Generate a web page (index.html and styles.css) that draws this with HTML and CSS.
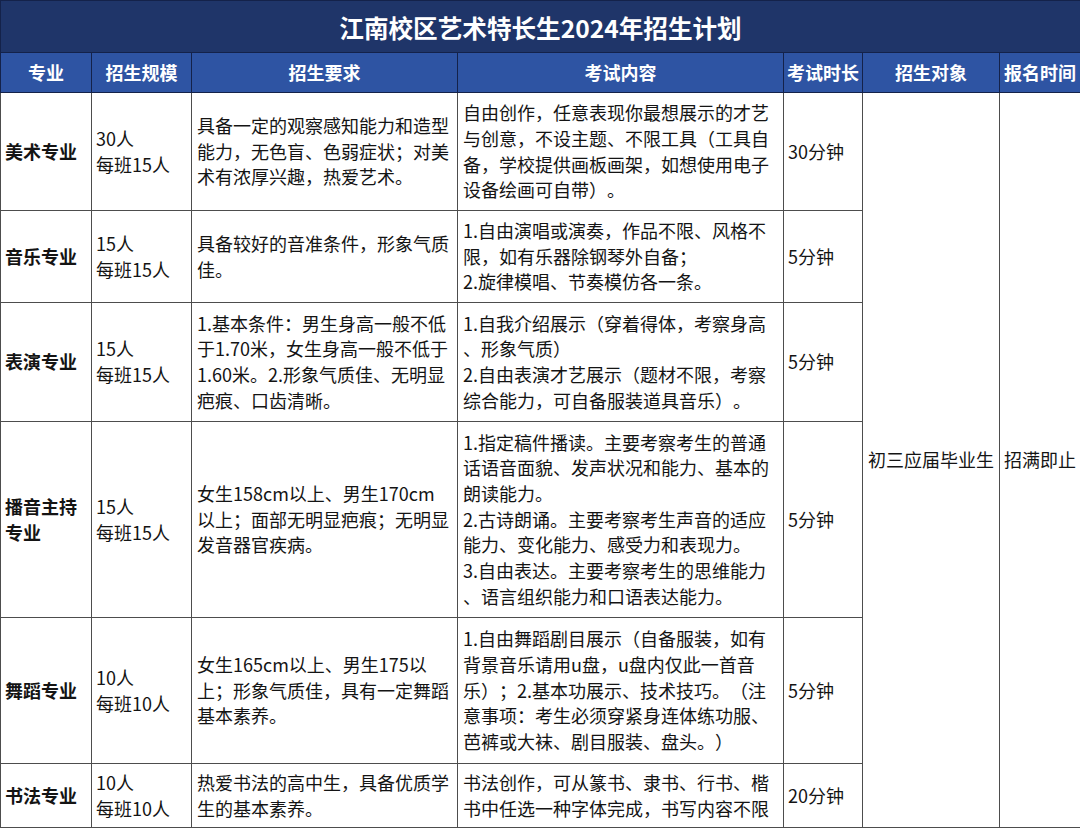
FILE: index.html
```html
<!DOCTYPE html>
<html lang="zh-CN">
<head>
<meta charset="utf-8">
<title>江南校区艺术特长生2024年招生计划</title>
<link rel="stylesheet" href="styles.css">
</head>
<body>
<table class="plan">
  <colgroup>
    <col class="c-major">
    <col class="c-scale">
    <col class="c-req">
    <col class="c-exam">
    <col class="c-dur">
    <col class="c-target">
    <col class="c-time">
  </colgroup>
  <thead>
    <tr class="title-row"><th colspan="7" class="title">江南校区艺术特长生2024年招生计划</th></tr>
    <tr class="head-row">
      <th>专业</th><th>招生规模</th><th>招生要求</th><th>考试内容</th><th>考试时长</th><th>招生对象</th><th>报名时间</th>
    </tr>
  </thead>
  <tbody>
    <tr class="r1">
      <td class="major">美术专业</td>
      <td>30人<br>每班15人</td>
      <td class="txt">具备一定的观察感知能力和造型<br>能力，无色盲、色弱症状；对美<br>术有浓厚兴趣，热爱艺术。</td>
      <td class="txt">自由创作，任意表现你最想展示的才艺<br>与创意，不设主题、不限工具（工具自<br>备，学校提供画板画架，如想使用电子<br>设备绘画可自带）。</td>
      <td>30分钟</td>
      <td rowspan="6" class="center">初三应届毕业生</td>
      <td rowspan="6" class="center">招满即止</td>
    </tr>
    <tr class="r2">
      <td class="major">音乐专业</td>
      <td>15人<br>每班15人</td>
      <td class="txt">具备较好的音准条件，形象气质<br>佳。</td>
      <td class="txt">1.自由演唱或演奏，作品不限、风格不<br>限，如有乐器除钢琴外自备；<br>2.旋律模唱、节奏模仿各一条。</td>
      <td>5分钟</td>
    </tr>
    <tr class="r3">
      <td class="major">表演专业</td>
      <td>15人<br>每班15人</td>
      <td class="txt">1.基本条件：男生身高一般不低<br>于1.70米，女生身高一般不低于<br>1.60米。2.形象气质佳、无明显<br>疤痕、口齿清晰。</td>
      <td class="txt">1.自我介绍展示（穿着得体，考察身高<br>、形象气质）<br>2.自由表演才艺展示（题材不限，考察<br>综合能力，可自备服装道具音乐）。</td>
      <td>5分钟</td>
    </tr>
    <tr class="r4">
      <td class="major">播音主持专业</td>
      <td>15人<br>每班15人</td>
      <td class="txt">女生158cm以上、男生170cm<br>以上；面部无明显疤痕；无明显<br>发音器官疾病。</td>
      <td class="txt">1.指定稿件播读。主要考察考生的普通<br>话语音面貌、发声状况和能力、基本的<br>朗读能力。<br>2.古诗朗诵。主要考察考生声音的适应<br>能力、变化能力、感受力和表现力。<br>3.自由表达。主要考察考生的思维能力<br>、语言组织能力和口语表达能力。</td>
      <td>5分钟</td>
    </tr>
    <tr class="r5">
      <td class="major">舞蹈专业</td>
      <td>10人<br>每班10人</td>
      <td class="txt">女生165cm以上、男生175以<br>上；形象气质佳，具有一定舞蹈<br>基本素养。</td>
      <td class="txt">1.自由舞蹈剧目展示（自备服装，如有<br>背景音乐请用u盘，u盘内仅此一首音<br>乐）；2.基本功展示、技术技巧。（注<br>意事项：考生必须穿紧身连体练功服、<br>芭裤或大袜、剧目服装、盘头。）</td>
      <td>5分钟</td>
    </tr>
    <tr class="r6">
      <td class="major">书法专业</td>
      <td>10人<br>每班10人</td>
      <td class="txt">热爱书法的高中生，具备优质学<br>生的基本素养。</td>
      <td class="txt">书法创作，可从篆书、隶书、行书、楷<br>书中任选一种字体完成，书写内容不限</td>
      <td>20分钟</td>
    </tr>
  </tbody>
</table>
</body>
</html>
```

FILE: styles.css
```css
html, body {
  margin: 0;
  padding: 0;
  background: #ffffff;
  overflow: hidden;
}

body {
  font-family: "Noto Sans CJK SC", "Noto Sans", sans-serif;
  color: #141414;
  width: 1080px;
  height: 828px;
  text-spacing-trim: space-all;
}

.plan {
  width: 1080px;
  border-collapse: collapse;
  table-layout: fixed;
  font-size: 18px;
  line-height: 25.7px;
}

.c-major { width: 91px; }
.c-scale { width: 100px; }
.c-req { width: 266px; }
.c-exam { width: 326px; }
.c-dur { width: 79px; }
.c-target { width: 137px; }
.c-time { width: 81px; }

.plan th,
.plan td {
  border: 1px solid #4d4d4d;
  padding: 0 4px;
  vertical-align: middle;
  text-align: left;
  overflow: hidden;
}

.plan td.txt {
  padding: 0 5px;
  white-space: nowrap;
}

.title-row { height: 52px; }

.plan th.title {
  background: #1f3569;
  color: #ffffff;
  font-size: 24.6px;
  font-weight: 700;
  text-align: center;
  border: 1px solid #14224a;
  padding-top: 2px;
}

.head-row { height: 40px; }

.head-row th {
  background: #2e54a3;
  color: #ffffff;
  font-weight: 700;
  text-align: center;
  border: 1px solid #14224a;
  padding: 0;
  white-space: nowrap;
}

.r1 { height: 118px; }
.r2 { height: 92px; }
.r3 { height: 119px; }
.r4 { height: 196px; }
.r5 { height: 146px; }
.r6 { height: 64px; }

.plan td.major {
  font-weight: 700;
}

.plan td.center {
  text-align: center;
  padding: 0;
  white-space: nowrap;
}
```
